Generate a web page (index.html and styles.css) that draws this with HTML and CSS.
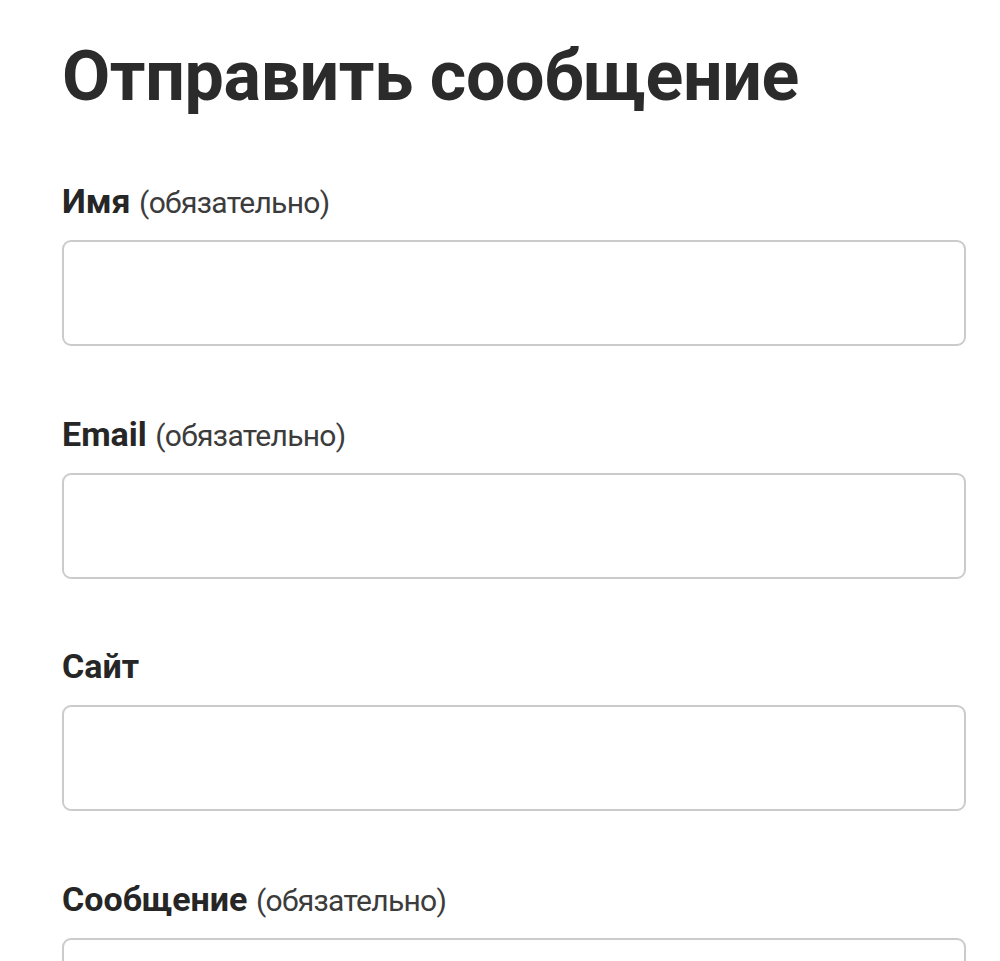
FILE: index.html
```html
<!DOCTYPE html>
<html lang="ru">
<head>
<meta charset="utf-8">
<title>Отправить сообщение</title>
<link rel="stylesheet" href="styles.css">
</head>
<body>
<main class="page">
  <h1 class="title">Отправить сообщение</h1>
  <form class="form">
    <div class="field">
      <label class="label" for="name">Имя <span class="note">(обязательно)</span></label>
      <input class="input" id="name" type="text">
    </div>
    <div class="field">
      <label class="label" for="email">Email <span class="note">(обязательно)</span></label>
      <input class="input" id="email" type="email">
    </div>
    <div class="field">
      <label class="label" for="site">Сайт</label>
      <input class="input" id="site" type="text">
    </div>
    <div class="field">
      <label class="label" for="msg">Сообщение <span class="note">(обязательно)</span></label>
      <textarea class="input textarea" id="msg"></textarea>
    </div>
  </form>
</main>
</body>
</html>
```
FILE: styles.css
```css
html, body {
  margin: 0;
  background: #ffffff;
}
body {
  font-family: Roboto, "Open Sans", sans-serif;
  color: #2b2b2b;
  overflow: hidden;
}
.page {
  padding: 35px 34px 0 62px;
}
.title {
  margin: 0;
  font-size: 70px;
  line-height: 82px;
  font-weight: 700;
  letter-spacing: -0.4px;
  color: #2b2b2b;
}
.form {
  margin-top: 64px;
  display: flex;
  flex-direction: column;
  gap: 67.5px;
}
.field {
  display: flex;
  flex-direction: column;
  gap: 19px;
}
.label {
  display: block;
  font-size: 34px;
  line-height: 40px;
  font-weight: 700;
  color: #262626;
}
.note {
  font-size: 30px;
  line-height: 30px;
  font-weight: 400;
  letter-spacing: -0.7px;
  color: #3c3c3c;
}
.input {
  display: block;
  box-sizing: border-box;
  width: 100%;
  height: 106px;
  border: 2px solid #cbcbcb;
  border-radius: 9px;
  background: #fff;
  margin: 0;
  font: inherit;
  outline: none;
}
.textarea {
  height: 200px;
  resize: none;
}
```
